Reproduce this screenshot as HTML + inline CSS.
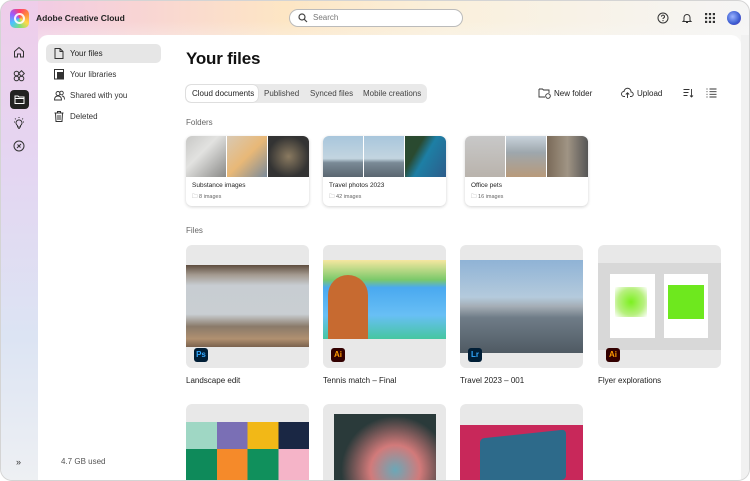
<!DOCTYPE html>
<html><head><style>
*{margin:0;padding:0;box-sizing:border-box}
body{width:750px;height:481px;overflow:hidden;font-family:"Liberation Sans",sans-serif;color:#222;position:relative;background:#fff}
.frame{position:absolute;left:0;top:0;width:750px;height:481px;border-radius:12px;border:1px solid #d4d4d4;overflow:hidden;
background:linear-gradient(180deg,rgba(248,248,248,0) 0,rgba(248,248,248,0) 20px,rgba(248,248,248,1) 70px),linear-gradient(90deg,#efc8ea 0%,#f8d4d4 18%,#fde6c4 38%,#faf0dc 60%,#f5f5f5 100%);}
.leftgrad{position:absolute;left:0;top:0;width:37px;height:481px;background:linear-gradient(180deg,#efcdea 0%,#e4d6f2 35%,#dce4f3 70%,#eef0f3 100%)}
.panel{position:absolute;left:37px;top:34px;width:703px;height:460px;background:#fff;border-radius:10px}
.abs{position:absolute}
.t{position:absolute;font-size:8px;white-space:nowrap}
.card{position:absolute;background:#e8e8e8;border-radius:6px;overflow:hidden}
.fold{position:absolute;width:123px;height:70px;border-radius:6px;box-shadow:0 1px 3px rgba(0,0,0,.18);background:#fff;overflow:hidden}
.fold .im{position:absolute;top:0;height:41px;width:40px}
.badge{position:absolute;width:14px;height:14px;border-radius:3px;font-size:8px;font-weight:bold;text-align:center;line-height:14px}
</style></head><body>
<div class="frame">
<div class="leftgrad"></div>
<div class="abs" style="left:9px;top:8px;width:19px;height:19px;border-radius:5px;background:conic-gradient(#ff3d6e,#ff8a3d,#ffd84a,#7be07b,#4ac2ff,#9b5cff,#ff3d6e)"></div>
<div class="abs" style="left:13px;top:12px;width:11px;height:11px;border-radius:50%;border:2px solid #fff;opacity:.9"></div>
<div class="t" style="left:35px;top:12px;font-size:8.5px;font-weight:bold;color:#222">Adobe Creative Cloud</div>
<div class="abs" style="left:288px;top:8px;width:174px;height:18px;border:1.5px solid #bbb;border-radius:10px;background:#fff"></div>
<svg class="abs" style="left:297px;top:12px" width="10" height="10" viewBox="0 0 10 10"><circle cx="4" cy="4" r="3" fill="none" stroke="#444" stroke-width="1.2"/><path d="M6.3 6.3L9 9" stroke="#444" stroke-width="1.2"/></svg>
<div class="t" style="left:312px;top:12px;color:#777">Search</div>
<svg class="abs" style="left:656px;top:11px" width="12" height="12" viewBox="0 0 12 12"><circle cx="6" cy="6" r="5" fill="none" stroke="#333" stroke-width="1"/><path d="M4.5 4.6a1.5 1.5 0 1 1 2 1.4c-.4.2-.5.5-.5 1" fill="none" stroke="#333" stroke-width="1"/><circle cx="6" cy="8.6" r=".6" fill="#333"/></svg>
<svg class="abs" style="left:680px;top:11px" width="12" height="12" viewBox="0 0 12 12"><path d="M3 8.5V5.5a3 3 0 0 1 6 0v3l1 1H2z M5 10.5h2" fill="none" stroke="#333" stroke-width="1"/></svg>
<svg class="abs" style="left:704px;top:12px" width="10" height="10" viewBox="0 0 10 10" fill="#333"><rect x="0" y="0" width="2.2" height="2.2"/><rect x="3.9" y="0" width="2.2" height="2.2"/><rect x="7.8" y="0" width="2.2" height="2.2"/><rect x="0" y="3.9" width="2.2" height="2.2"/><rect x="3.9" y="3.9" width="2.2" height="2.2"/><rect x="7.8" y="3.9" width="2.2" height="2.2"/><rect x="0" y="7.8" width="2.2" height="2.2"/><rect x="3.9" y="7.8" width="2.2" height="2.2"/><rect x="7.8" y="7.8" width="2.2" height="2.2"/></svg>
<div class="abs" style="left:726px;top:10px;width:14px;height:14px;border-radius:50%;background:radial-gradient(circle at 40% 40%,#9ab3ff,#3a5bd0 60%,#6a2fb0)"></div>
<svg class="abs" style="left:12px;top:45px" width="12" height="12" viewBox="0 0 12 12"><path d="M1.5 5.5L6 1.5l4.5 4V11h-3V8h-3v3h-3z" fill="none" stroke="#333" stroke-width="1"/></svg>
<svg class="abs" style="left:12px;top:69px" width="12" height="12" viewBox="0 0 12 12" fill="none" stroke="#333" stroke-width="1"><circle cx="3.5" cy="8.5" r="2.3"/><circle cx="8.5" cy="8.5" r="2.3"/><circle cx="3.5" cy="3.5" r="2.3"/><rect x="6.5" y="1.5" width="4" height="4" transform="rotate(45 8.5 3.5)"/></svg>
<div class="abs" style="left:9px;top:89px;width:19px;height:19px;border-radius:4px;background:#222"></div>
<svg class="abs" style="left:13px;top:93px" width="11" height="11" viewBox="0 0 11 11"><path d="M1 2h3l1 1h5v6.5H1z M1 4.5h9" fill="none" stroke="#fff" stroke-width="1"/></svg>
<svg class="abs" style="left:12px;top:116px" width="12" height="12" viewBox="0 0 12 12" fill="none" stroke="#333" stroke-width="1"><path d="M4.5 8.5a3 3 0 1 1 3 0V10h-3z M5 11.3h2 M6 0v1 M1 5h1 M10 5h1 M2 1.5l.8.8 M10 1.5l-.8.8"/></svg>
<svg class="abs" style="left:12px;top:139px" width="12" height="12" viewBox="0 0 12 12" fill="none" stroke="#333" stroke-width="1"><circle cx="6" cy="6" r="5"/><path d="M4 8l4-4 M4.5 4.5l3 3" /></svg>
<div class="t" style="left:15px;top:456px;font-size:9px;color:#333">»</div>
<div class="panel"></div>
<div class="abs" style="left:740px;top:34px;width:10px;height:447px;background:#f1f1f1"></div>
<div class="abs" style="left:45px;top:43px;width:115px;height:19px;border-radius:5px;background:#e6e6e6"></div>
<svg class="abs" style="left:53px;top:47px" width="10" height="11" viewBox="0 0 10 11"><path d="M1 .5h5l3 3v7H1z M6 .5v3h3" fill="none" stroke="#333" stroke-width="1"/></svg>
<div class="t" style="left:69px;top:48px;color:#222">Your files</div>
<svg class="abs" style="left:53px;top:68px" width="10" height="11" viewBox="0 0 10 11"><rect x=".5" y=".5" width="9" height="9.5" fill="none" stroke="#333"/><rect x="3" y="3" width="6.5" height="7" fill="#333"/></svg>
<div class="t" style="left:69px;top:69px;color:#333">Your libraries</div>
<svg class="abs" style="left:53px;top:89px" width="11" height="11" viewBox="0 0 11 11" fill="none" stroke="#333" stroke-width=".9"><circle cx="4" cy="3.5" r="2"/><circle cx="7.5" cy="3" r="1.8"/><path d="M.5 10c0-3 1.5-4 3.5-4s3.5 1 3.5 4z M8 6c1.5 0 2.5 1 2.5 3.5"/></svg>
<div class="t" style="left:69px;top:90px;color:#333">Shared with you</div>
<svg class="abs" style="left:53px;top:110px" width="10" height="11" viewBox="0 0 10 11" fill="none" stroke="#333" stroke-width="1"><path d="M.5 2h9 M3.5 2V.5h3V2 M1.5 2l.5 8.5h6l.5-8.5 M4 4v5 M6 4v5"/></svg>
<div class="t" style="left:69px;top:111px;color:#333">Deleted</div>
<div class="t" style="left:60px;top:456px;color:#555">4.7 GB used</div>
<div class="t" style="left:185px;top:48px;font-size:17px;font-weight:bold;color:#111;letter-spacing:-.2px">Your files</div>
<div class="abs" style="left:184px;top:83px;width:242px;height:19px;border-radius:6px;background:#e9e9e9"></div>
<div class="abs" style="left:185px;top:84px;width:72px;height:17px;border-radius:5px;background:#fff;box-shadow:0 0 1px rgba(0,0,0,.3)"></div>
<div class="t" style="left:191px;top:88px;color:#222">Cloud documents</div>
<div class="t" style="left:263px;top:88px;color:#444">Published</div>
<div class="t" style="left:309px;top:88px;color:#444">Synced files</div>
<div class="t" style="left:362px;top:88px;color:#444">Mobile creations</div>
<svg class="abs" style="left:537px;top:86px" width="13" height="12" viewBox="0 0 13 12" fill="none" stroke="#333" stroke-width=".9"><path d="M1 2h3.5l1 1H11v3 M1 2v8h6"/><circle cx="10" cy="9" r="2.3"/></svg>
<div class="t" style="left:553px;top:88px;color:#222">New folder</div>
<svg class="abs" style="left:620px;top:86px" width="13" height="12" viewBox="0 0 13 12" fill="none" stroke="#333" stroke-width=".9"><path d="M4 9.5H3a2.5 2.5 0 0 1 0-5 3.5 3.5 0 0 1 7 .5 2.2 2.2 0 0 1 0 4.5H9 M6.5 11V6 M4.8 7.5l1.7-1.7 1.7 1.7"/></svg>
<div class="t" style="left:636px;top:88px;color:#222">Upload</div>
<svg class="abs" style="left:682px;top:87px" width="11" height="10" viewBox="0 0 11 10" fill="none" stroke="#333" stroke-width=".9"><path d="M.5 1.5h6 M.5 4.5h5 M.5 7.5h4 M8.5 1v8 M7 7.5l1.5 1.5L10 7.5"/></svg>
<svg class="abs" style="left:705px;top:87px" width="11" height="10" viewBox="0 0 11 10" fill="none" stroke="#333" stroke-width=".9"><path d="M3.5 1h7 M3.5 3.7h7 M3.5 6.3h7 M3.5 9h7 M.5 1h1 M.5 3.7h1 M.5 6.3h1 M.5 9h1"/></svg>
<div class="t" style="left:185px;top:117px;color:#666">Folders</div>
<div class="fold" style="left:185px;top:135px">
<div class="im" style="left:0;background:linear-gradient(135deg,#c8c8c6,#e2e2e0 40%,#8a8a88)"></div>
<div class="im" style="left:41px;background:linear-gradient(135deg,#d9c9b3,#e8b877 50%,#7a8a9a)"></div>
<div class="im" style="left:82px;width:41px;background:radial-gradient(circle at 50% 50%,#8a7a60,#333 70%)"></div>
<div class="t" style="left:6px;top:46px;font-size:6.5px;color:#222">Substance images</div>
<div class="t" style="left:6px;top:57px;font-size:5.5px;color:#666">🗀 8 images</div></div>
<div class="fold" style="left:322px;top:135px">
<div class="im" style="left:0;background:linear-gradient(180deg,#a8c6dc,#c3d5e0 55%,#7a8a96 65%,#5a6670)"></div>
<div class="im" style="left:41px;background:linear-gradient(180deg,#a8c6dc,#c3d5e0 55%,#7a8a96 65%,#5a6670)"></div>
<div class="im" style="left:82px;width:41px;background:linear-gradient(120deg,#2a4a30 30%,#1d7fa5 50%,#2d5c8a)"></div>
<div class="t" style="left:6px;top:46px;font-size:6.5px;color:#222">Travel photos 2023</div>
<div class="t" style="left:6px;top:57px;font-size:5.5px;color:#666">🗀 42 images</div></div>
<div class="fold" style="left:464px;top:135px">
<div class="im" style="left:0;background:linear-gradient(180deg,#c8c8c8,#b9b3ac)"></div>
<div class="im" style="left:41px;background:linear-gradient(180deg,#c9d3dc,#9ea7ad 40%,#b89a7a)"></div>
<div class="im" style="left:82px;width:41px;background:linear-gradient(90deg,#7a6a58,#a09484 50%,#555)"></div>
<div class="t" style="left:6px;top:46px;font-size:6.5px;color:#222">Office pets</div>
<div class="t" style="left:6px;top:57px;font-size:5.5px;color:#666">🗀 16 images</div></div>
<div class="t" style="left:185px;top:225px;color:#666">Files</div>
<div class="card" style="left:185px;top:244px;width:123px;height:123px">
<div class="abs" style="left:0;top:20px;width:123px;height:82px;background:linear-gradient(180deg,#5e4c3e 0%,#a49a90 12%,#c8cdd2 25%,#c9ced2 60%,#8a7a6a 75%,#b09070 90%,#7a624e)"></div>
<div class="badge" style="left:8px;top:103px;background:#001e36;color:#31a8ff">Ps</div></div>
<div class="card" style="left:322px;top:244px;width:123px;height:123px">
<div class="abs" style="left:0;top:15px;width:123px;height:79px;background:linear-gradient(180deg,#f5e7a0 0%,#7bc96a 25%,#4aa9f0 35%,#68bff5 70%,#46c6a0 100%)"></div>
<div class="abs" style="left:5px;top:30px;width:40px;height:64px;background:#c76a30;border-radius:20px 20px 0 0"></div>
<div class="badge" style="left:8px;top:103px;background:#330000;color:#ff9a00">Ai</div></div>
<div class="card" style="left:459px;top:244px;width:123px;height:123px">
<div class="abs" style="left:0;top:15px;width:123px;height:93px;background:linear-gradient(180deg,#8fb3d6 0%,#b4cadc 40%,#a4adb5 50%,#6f7c87 62%,#4f5a63 100%)"></div>
<div class="badge" style="left:8px;top:103px;background:#001e36;color:#31a8ff">Lr</div></div>
<div class="card" style="left:597px;top:244px;width:123px;height:123px">
<div class="abs" style="left:0;top:18px;width:123px;height:87px;background:#d8d8d8"></div>
<div class="abs" style="left:12px;top:29px;width:45px;height:64px;background:#fff"></div>
<div class="abs" style="left:17px;top:42px;width:32px;height:30px;background:radial-gradient(circle,#7cf020,#b8f080 60%,#fff)"></div>
<div class="abs" style="left:66px;top:29px;width:44px;height:64px;background:#fff"></div>
<div class="abs" style="left:70px;top:40px;width:36px;height:34px;background:#6ee81e"></div>
<div class="badge" style="left:8px;top:103px;background:#330000;color:#ff9a00">Ai</div></div>
<div class="t" style="left:185px;top:375px;font-size:8px;color:#222">Landscape edit</div>
<div class="t" style="left:322px;top:375px;font-size:8px;color:#222">Tennis match – Final</div>
<div class="t" style="left:459px;top:375px;font-size:8px;color:#222">Travel 2023 – 001</div>
<div class="t" style="left:597px;top:375px;font-size:8px;color:#222">Flyer explorations</div>
<div class="card" style="left:185px;top:403px;width:123px;height:90px">
<div class="abs" style="left:0;top:18px;width:123px;height:70px;background:linear-gradient(90deg,#9fd7c4 0 25%,#7a6fb5 25% 50%,#f2b817 50% 75%,#1a2744 75%)"></div>
<div class="abs" style="left:0;top:45px;width:123px;height:40px;background:linear-gradient(90deg,#0e8a5a 0 25%,#f58a2a 25% 50%,#10905c 50% 75%,#f5b4c8 75%)"></div></div>
<div class="card" style="left:322px;top:403px;width:123px;height:90px">
<div class="abs" style="left:11px;top:10px;width:102px;height:80px;background:radial-gradient(circle at 60% 70%,#6aa8b8,#d27a7a 30%,#2a3a3a 65%)"></div></div>
<div class="card" style="left:459px;top:403px;width:123px;height:90px">
<div class="abs" style="left:0;top:21px;width:123px;height:70px;background:#c8285a"></div>
<div class="abs" style="left:20px;top:30px;width:86px;height:50px;background:#2d6a8a;border-radius:4px;transform:skewY(-6deg)"></div></div>
</div>
</body></html>
